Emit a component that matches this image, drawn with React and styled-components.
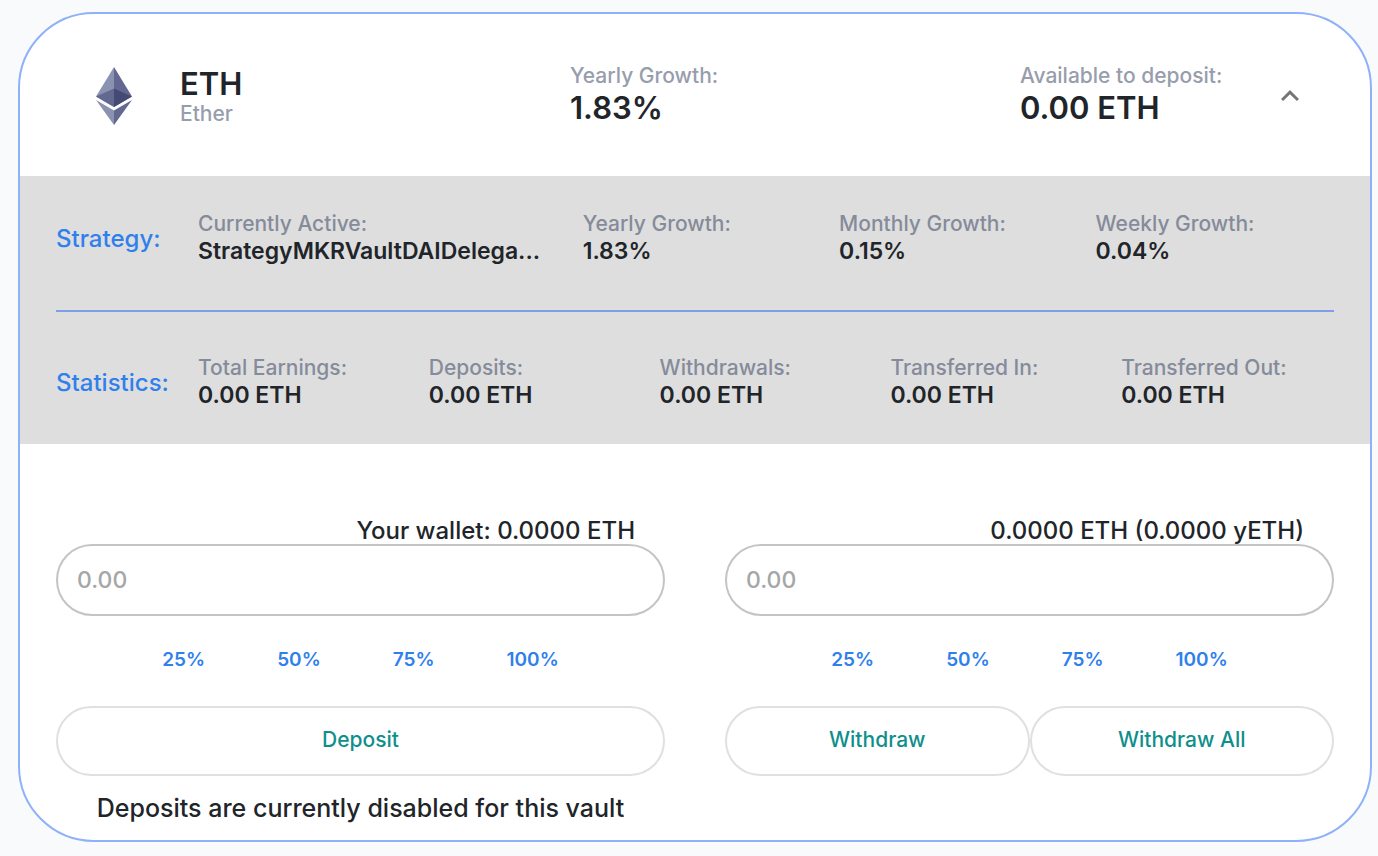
import React, { useState } from "react";
import styled, { createGlobalStyle } from "styled-components";

const GlobalStyle = createGlobalStyle`
  *, *::before, *::after { box-sizing: border-box; }
  body {
    margin: 0;
    background: #f9fafc;
    color: #212529;
    font-family: Inter, "Liberation Sans", sans-serif;
    font-weight: 500;
  }
  button, input { font: inherit; }
`;

const Card = styled.main`
  margin: 12px 6px 14px 18px;
  border: 2px solid #8fb1f9;
  border-radius: 76px;
  background: #fff;
  overflow: hidden;
`;

const Header = styled.header`
  display: grid;
  grid-template-columns: 36px 438fr 450fr 250fr 40px;
  align-items: center;
  min-height: 162px;
  padding: 2px 60px 0 76px;
`;

const Asset = styled.div`
  padding-left: 48px;
`;

const Label = styled.div`
  color: ${(p) => (p.$muted ? "#858b9a" : "#979dac")};
  font-size: 21px;
  line-height: 24px;
  white-space: nowrap;
`;

const Headline = styled.div`
  font-size: 31px;
  line-height: ${(p) => (p.$tight ? "36px" : "40px")};
  font-weight: 600;
  white-space: nowrap;
`;

const Toggle = styled.button`
  display: flex;
  justify-content: center;
  padding: 0;
  border: 0;
  background: none;
  color: #757575;
  cursor: pointer;
`;

const Details = styled.section`
  background: #dedede;
`;

const DetailRow = styled.div`
  display: grid;
  grid-template-columns: 142px ${(p) => p.$columns};
  align-items: center;
  padding: ${(p) => p.$pad};
`;

const RowTitle = styled.h2`
  margin: 0;
  color: #2f80ed;
  font-size: 24px;
  line-height: 32px;
  font-weight: 500;
`;

const Stat = styled.div`
  min-width: 0;
  padding-right: 24px;
`;

const StatValue = styled.div`
  font-size: 23px;
  line-height: 30px;
  font-weight: 600;
  white-space: nowrap;
`;

const Divider = styled.hr`
  height: 2px;
  margin: 0 36px;
  border: 0;
  background: #7f9fe6;
`;

const Actions = styled.section`
  display: grid;
  grid-template-columns: 1fr 1fr;
  gap: 60px;
  padding: 74px 36px 18px;
`;

const Balance = styled.label`
  display: block;
  padding-right: 30px;
  font-size: 24px;
  line-height: 26px;
  text-align: right;
`;

const AmountInput = styled.input`
  display: block;
  width: 100%;
  height: 72px;
  padding: 0 19px;
  border: 2px solid #c4c4c4;
  border-radius: 36px;
  background: #fff;
  color: #212529;
  font-size: 23px;
  &::placeholder { color: #a6a6a6; opacity: 1; }
`;

const Percents = styled.div`
  display: flex;
  justify-content: center;
  gap: 72px;
  padding: 32px 0 34px;
`;

const PercentButton = styled.button`
  padding: 0;
  border: 0;
  background: none;
  color: #2f80ed;
  font-size: 19px;
  line-height: 24px;
  font-weight: 600;
  cursor: pointer;
`;

const ButtonRow = styled.div`
  display: flex;
`;

const ActionButton = styled.button`
  flex: 1;
  height: 70px;
  padding: 0 20px 2px;
  border: 2px solid #e0e0e0;
  border-radius: 35px;
  background: #fff;
  color: #0f8f8c;
  font-size: 21px;
  line-height: 24px;
  cursor: pointer;
`;

const Notice = styled.p`
  margin: 18px 0 0;
  font-size: 25px;
  line-height: 28px;
  text-align: center;
`;

function EtherLogo() {
  return (
    <svg width="36" height="58" viewBox="0 0 36 58" role="img" aria-label="Ether">
      <path fill="#8a92b2" d="M18 0 0 29.500 18 40z" />
      <path fill="#62688f" d="M18 0v40l18-10.500z" />
      <path fill="#62688f" d="M18 21.500 0 29.500 18 40z" />
      <path fill="#454a75" d="M18 21.500V40l18-10.500z" />
      <path fill="#8a92b2" d="M0 33 18 58V43.500z" />
      <path fill="#62688f" d="M18 43.500V58l18-25z" />
    </svg>
  );
}

function Field({ label, value }) {
  return (
    <Stat>
      <Label $muted>{label}</Label>
      <StatValue>{value}</StatValue>
    </Stat>
  );
}

const strategy = [
  ["Currently Active:", "StrategyMKRVaultDAIDelega..."],
  ["Yearly Growth:", "1.83%"],
  ["Monthly Growth:", "0.15%"],
  ["Weekly Growth:", "0.04%"],
];

const statistics = [
  ["Total Earnings:", "0.00 ETH"],
  ["Deposits:", "0.00 ETH"],
  ["Withdrawals:", "0.00 ETH"],
  ["Transferred In:", "0.00 ETH"],
  ["Transferred Out:", "0.00 ETH"],
];

function AmountForm({ id, balance, actions, notice }) {
  const [amount, setAmount] = useState("");
  return (
    <div>
      <Balance htmlFor={id}>{balance}</Balance>
      <AmountInput
        id={id}
        placeholder="0.00"
        value={amount}
        onChange={(e) => setAmount(e.target.value)}
      />
      <Percents>
        {["25%", "50%", "75%", "100%"].map((p) => (
          <PercentButton key={p} type="button">{p}</PercentButton>
        ))}
      </Percents>
      <ButtonRow>
        {actions.map((a) => (
          <ActionButton key={a} type="button">{a}</ActionButton>
        ))}
      </ButtonRow>
      {notice && <Notice>{notice}</Notice>}
    </div>
  );
}

export default function App() {
  return (
    <>
      <GlobalStyle />
      <Card>
        <Header>
          <EtherLogo />
          <Asset>
            <Headline $tight>ETH</Headline>
            <Label>Ether</Label>
          </Asset>
          <div>
            <Label>Yearly Growth:</Label>
            <Headline>1.83%</Headline>
          </div>
          <div>
            <Label>Available to deposit:</Label>
            <Headline>0.00 ETH</Headline>
          </div>
          <Toggle type="button" aria-label="Collapse">
            <svg width="36" height="36" viewBox="0 0 24 24" fill="currentColor">
              <path d="M12 8l-6 6 1.410 1.410L12 10.830l4.590 4.580L18 14z" />
            </svg>
          </Toggle>
        </Header>
        <Details>
          <DetailRow $columns="3fr 2fr 2fr 2fr" $pad="36px 18px 44px 36px">
            <RowTitle>Strategy:</RowTitle>
            {strategy.map(([l, v]) => <Field key={l} label={l} value={v} />)}
          </DetailRow>
          <Divider />
          <DetailRow $columns="repeat(5, 1fr)" $pad="44px 18px 34px 36px">
            <RowTitle>Statistics:</RowTitle>
            {statistics.map(([l, v]) => <Field key={l} label={l} value={v} />)}
          </DetailRow>
        </Details>
        <Actions>
          <AmountForm
            id="deposit"
            balance="Your wallet: 0.0000 ETH"
            actions={["Deposit"]}
            notice="Deposits are currently disabled for this vault"
          />
          <AmountForm
            id="withdraw"
            balance="0.0000 ETH (0.0000 yETH)"
            actions={["Withdraw", "Withdraw All"]}
          />
        </Actions>
      </Card>
    </>
  );
}
